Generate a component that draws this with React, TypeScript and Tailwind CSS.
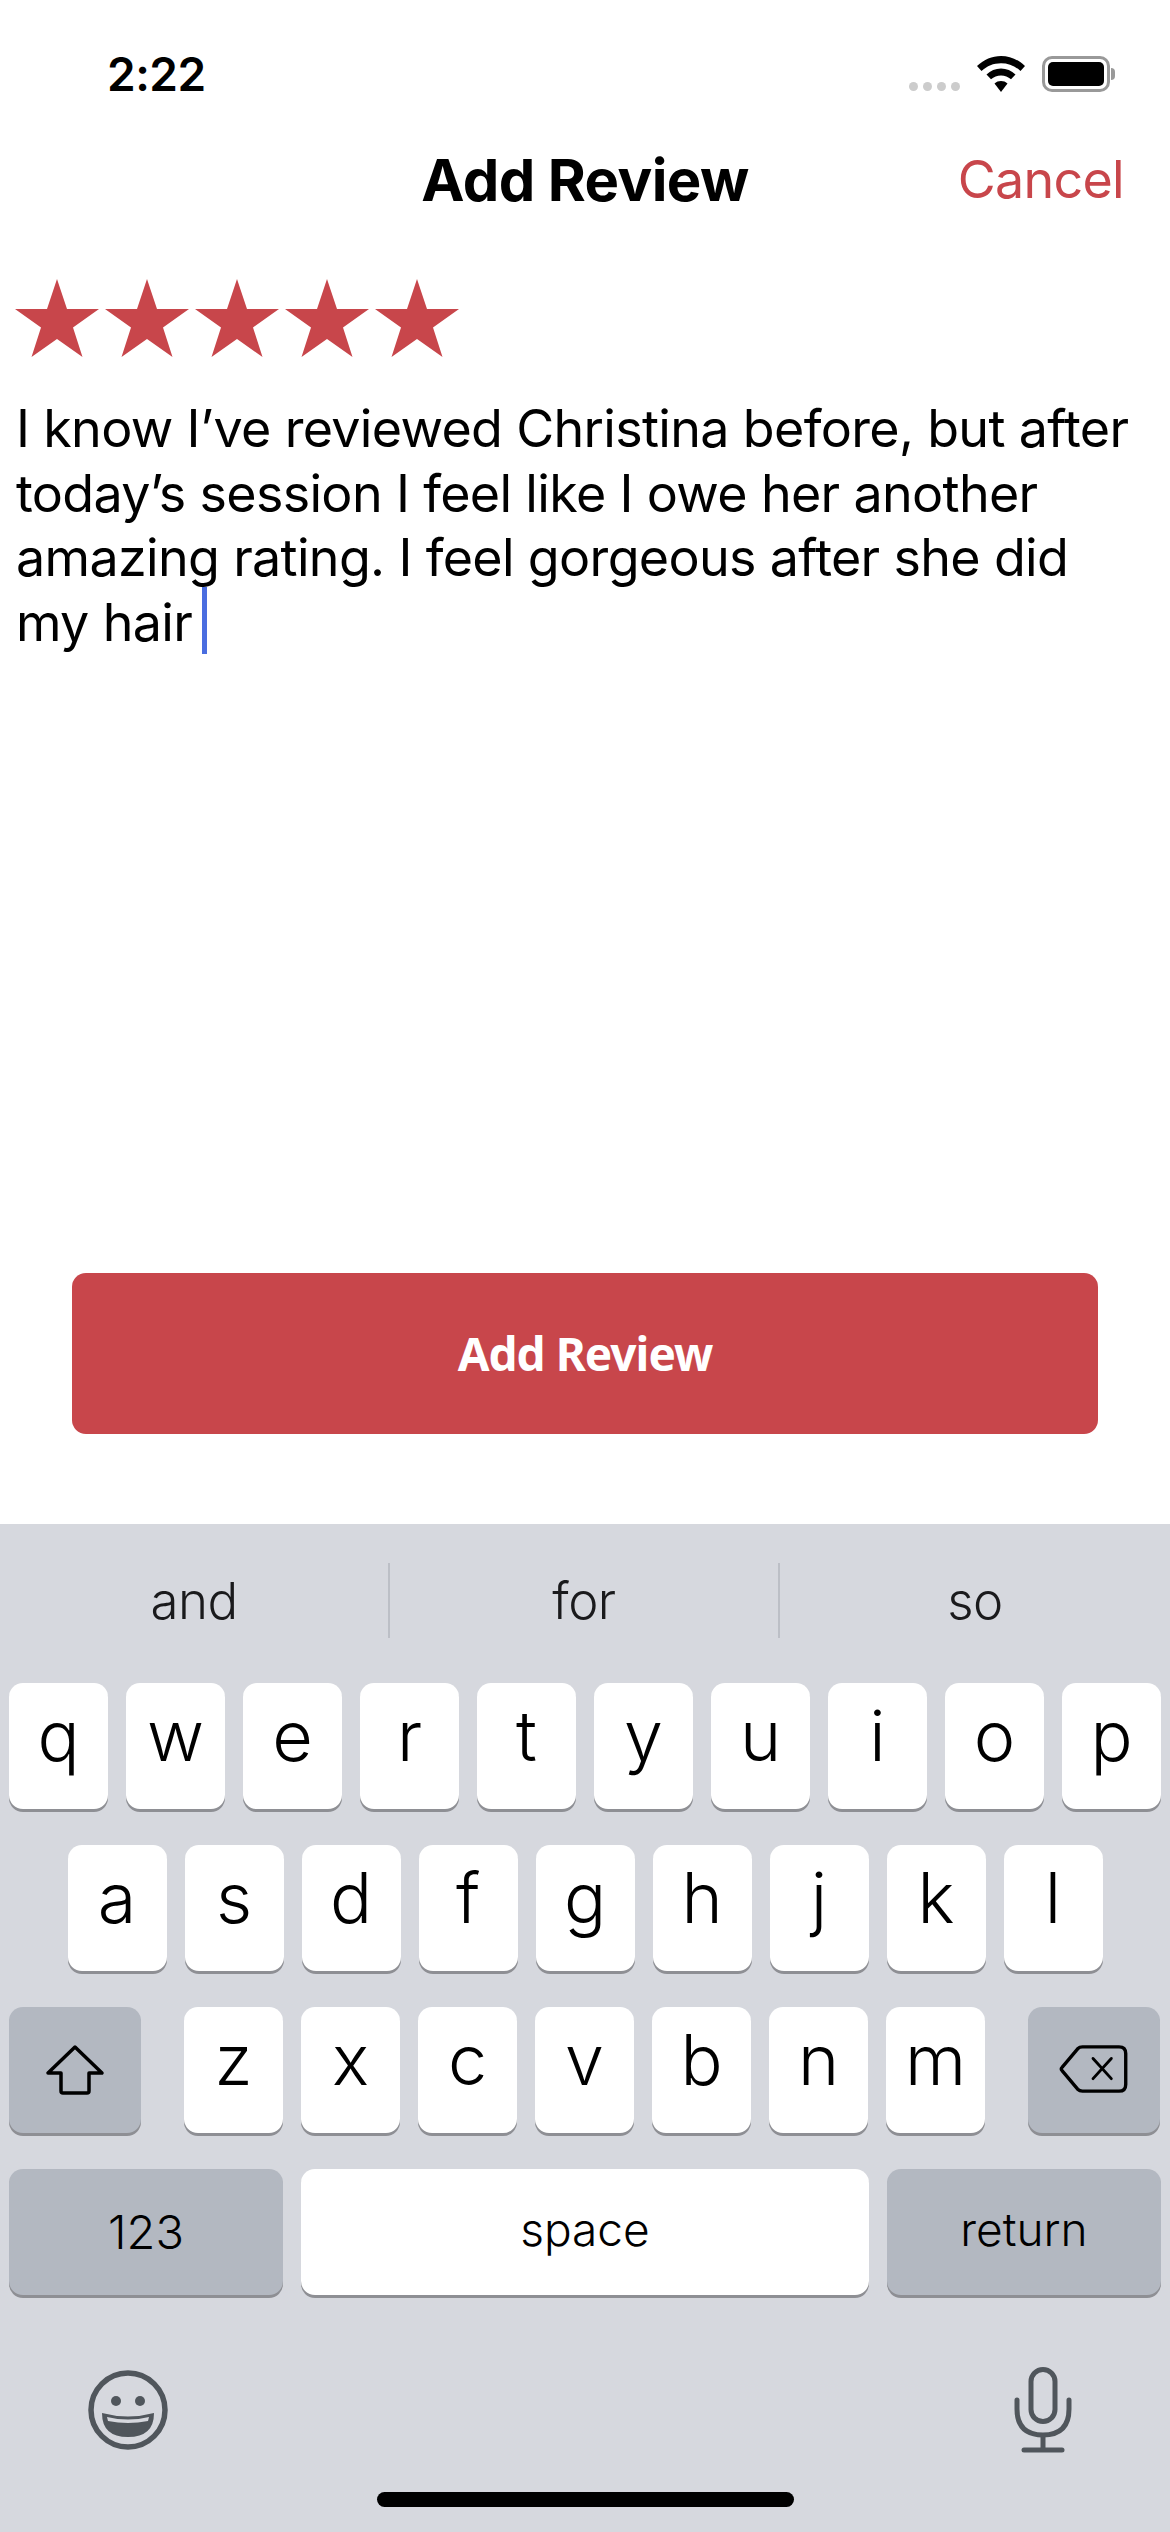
const sans = "font-['Inter','Liberation_Sans',sans-serif]";

function Star() {
  return (
    <svg width="84" height="78" viewBox="0 0 84 78" className="block">
      <polygon fill="#c8464b" points="42,0 52,30 84,30 58,48.5 67.5,78 42,60 16.5,78 26,48.5 0,30 32,30" />
    </svg>
  );
}

function Key({ label }: { label: string }) {
  return (
    <div className="flex h-[126px] w-[99px] items-start justify-center rounded-[14px] bg-white pt-[12px] text-[70px] leading-[82px] font-light text-black shadow-[0_3px_0_#8e8f94]">
      {label}
    </div>
  );
}

function Row({ letters }: { letters: string }) {
  return (
    <>
      {letters.split("").map((l) => (
        <Key key={l} label={l} />
      ))}
    </>
  );
}

function Shift() {
  return (
    <svg width="60" height="52" viewBox="0 0 60 52" fill="none" stroke="#000" strokeWidth="3.500" strokeLinejoin="round" className="mb-[1px]">
      <path d="M30 3 L57 29 H44 V47 Q44 49 42 49 H18 Q16 49 16 47 V29 H3 Z" />
    </svg>
  );
}

function Backspace() {
  return (
    <svg width="70" height="50" viewBox="0 0 72 52" fill="none" stroke="#000" strokeWidth="3.500" strokeLinecap="round" strokeLinejoin="round" className="mb-[3px]">
      <path d="M24 3 H62 Q69 3 69 10 V42 Q69 49 62 49 H24 Q21 49 19 47 L3 28 Q1 26 3 24 L19 5 Q21 3 24 3 Z" />
      <path d="M35 15 L54 36 M54 15 L35 36" strokeWidth="3" />
    </svg>
  );
}

function Emoji() {
  return (
    <svg width="80" height="80" viewBox="0 0 80 80" className="block">
      <circle cx="40" cy="40" r="37" fill="none" stroke="#50565c" strokeWidth="5.500" />
      <circle cx="28" cy="31" r="5" fill="#50565c" />
      <circle cx="52" cy="31" r="5" fill="#50565c" />
      <path d="M14 43 Q40 50 66 43 Q66 67 40 67 Q14 67 14 43 Z" fill="#50565c" />
      <path d="M19 47 Q40 52 61 47 L60 51 Q40 55 20 51 Z" fill="#d6d8de" />
    </svg>
  );
}

function Mic() {
  return (
    <svg width="58" height="86" viewBox="0 0 58 86" fill="none" stroke="#50565c" strokeLinecap="round" className="block">
      <rect x="17" y="2.500" width="24" height="52" rx="12" strokeWidth="5" />
      <path d="M3 33 V42 Q3 68 29 68 Q55 68 55 42 V33" strokeWidth="5" />
      <path d="M29 68 V82" strokeWidth="5" strokeLinecap="butt" />
      <path d="M10 83 H48" strokeWidth="5" />
    </svg>
  );
}

function Wifi() {
  return (
    <svg width="48" height="36" viewBox="0 0 48 36" className="block">
      <path d="M24 0 C33 0 41 3.500 48 10 L43.500 15 C38 10 31.500 7.300 24 7.300 C16.500 7.300 10 10 4.500 15 L0 10 C7 3.500 15 0 24 0 Z" fill="#000" />
      <path d="M24 12.500 C29.500 12.500 34.500 14.500 38.500 18.500 L34 23.300 C31.200 20.800 27.800 19.500 24 19.500 C20.200 19.500 16.800 20.800 14 23.300 L9.500 18.500 C13.500 14.500 18.500 12.500 24 12.500 Z" fill="#000" />
      <path d="M24 25 C26.500 25 28.700 25.800 30.500 27.500 L24 36 L17.500 27.500 C19.300 25.800 21.500 25 24 25 Z" fill="#000" />
    </svg>
  );
}

export default function App() {
  return (
    <div className={`flex h-[2532px] w-[1170px] flex-col overflow-hidden bg-white ${sans}`}>
      {/* status bar */}
      <div className="flex h-[92px] items-start justify-between pt-[48px] pr-[55px] pl-[107px]">
        <span className="text-[46px] leading-[52px] font-semibold tracking-[-0.5px] text-black">2:22</span>
        <div className="mt-[8px] flex items-end">
          <div className="flex gap-[5px] pb-[1px]">
            <div className="h-[9px] w-[9px] rounded-full bg-[#cccccc]" />
            <div className="h-[9px] w-[9px] rounded-full bg-[#cccccc]" />
            <div className="h-[9px] w-[9px] rounded-full bg-[#cccccc]" />
            <div className="h-[9px] w-[9px] rounded-full bg-[#cccccc]" />
          </div>
          <div className="ml-[17px]">
            <Wifi />
          </div>
          <div className="ml-[17px] flex items-center">
            <div className="h-[36px] w-[68px] rounded-[10px] border-[3px] border-[#999999] p-[3px]">
              <div className="h-full w-full rounded-[5px] bg-black" />
            </div>
            <div className="ml-[1px] h-[12px] w-[4px] rounded-r-full bg-[#999999]" />
          </div>
        </div>
      </div>

      {/* nav */}
      <div className="mt-[56px] grid h-[64px] grid-cols-[1fr_auto_1fr] items-center px-[46px]">
        <div />
        <span className="text-[58px] leading-[64px] font-bold tracking-[-0.6px] text-black">Add Review</span>
        <span className="text-right text-[52px] leading-[64px] font-normal tracking-[-0.7px] text-[#c8464b]">Cancel</span>
      </div>

      {/* stars */}
      <div className="mt-[67px] flex gap-[6px] pl-[15px]">
        <Star />
        <Star />
        <Star />
        <Star />
        <Star />
      </div>

      {/* review text */}
      <p className="mt-[40px] pl-[16px] text-[52px] leading-[64.5px] font-normal tracking-[-0.67px] whitespace-pre text-black">
        {"I know I’ve reviewed Christina before, but after\ntoday’s session I feel like I owe her another\namazing rating. I feel gorgeous after she did\nmy hair"}
        <span className="-my-[10px] ml-[10px] inline-block h-[67px] w-[5px] bg-[#4a6de0] align-[-3px]" />
      </p>

      <div className="flex-1" />

      {/* button */}
      <div className="mx-[72px] mb-[90px] flex h-[161px] items-center justify-center rounded-[14px] bg-[#c8464b] font-['Noto_Sans',sans-serif] text-[46px] font-bold tracking-[-1px] text-white">
        Add Review
      </div>

      {/* keyboard */}
      <div className="flex h-[1008px] flex-col bg-[#d6d8de]">
        <div className="mt-[39px] grid h-[75px] grid-cols-3 items-center text-center text-[51px] leading-[75px] font-[350] tracking-[-0.5px] text-[#1a1a1c]">
          <span className="border-r-[2px] border-[#bcbfc6]">and</span>
          <span className="border-r-[2px] border-[#bcbfc6]">for</span>
          <span>so</span>
        </div>
        <div className="mt-[45px] flex flex-col gap-[36px] px-[9px]">
          <div className="flex justify-between">
            <Row letters="qwertyuiop" />
          </div>
          <div className="flex justify-center gap-[18px]">
            <Row letters="asdfghjkl" />
          </div>
          <div className="flex">
            <div className="flex h-[126px] w-[132px] items-center justify-center rounded-[14px] bg-[#b3b8c1] shadow-[0_3px_0_#8e8f94]">
              <Shift />
            </div>
            <div className="mx-[43px] flex gap-[18px]">
              <Row letters="zxcvbnm" />
            </div>
            <div className="flex h-[126px] w-[132px] items-center justify-center rounded-[14px] bg-[#b3b8c1] shadow-[0_3px_0_#8e8f94]">
              <Backspace />
            </div>
          </div>
          <div className="flex gap-[18px] text-[46px] font-[350] text-black">
            <div className="flex h-[126px] w-[274px] items-center justify-center rounded-[14px] bg-[#b3b8c1] text-[47px] shadow-[0_3px_0_#8e8f94]">123</div>
            <div className="flex h-[126px] w-[568px] items-center justify-center rounded-[14px] bg-white pb-[6px] shadow-[0_3px_0_#8e8f94]">space</div>
            <div className="flex h-[126px] w-[274px] items-center justify-center rounded-[14px] bg-[#b3b8c1] pb-[6px] shadow-[0_3px_0_#8e8f94]">return</div>
          </div>
        </div>
        <div className="mt-[72px] flex items-start justify-between pr-[98px] pl-[88px]">
          <div className="mt-[3px]">
            <Emoji />
          </div>
          <Mic />
        </div>
        <div className="mx-auto mt-[39px] h-[15px] w-[417px] rounded-full bg-black" />
      </div>
    </div>
  );
}
